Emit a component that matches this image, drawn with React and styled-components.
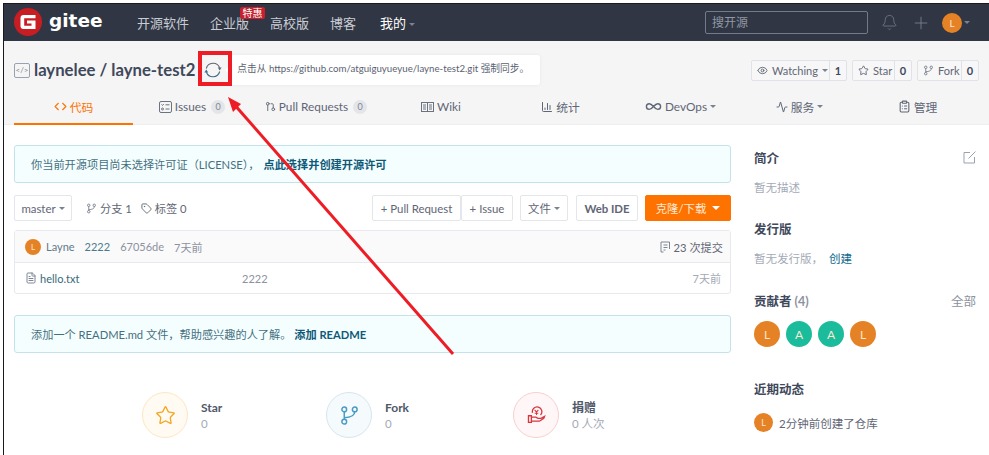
import React from "react";
import styled, { createGlobalStyle } from "styled-components";
import {
  Bell,
  Plus,
  Eye,
  Star,
  Tag,
  FileText,
  GitPullRequest,
  ChartColumn,
  Infinity as InfinityIcon,
  Activity,
  ClipboardList,
  Code,
} from "lucide-react";

const Global = createGlobalStyle`
  html, body { margin: 0; padding: 0; background: #fff; overflow: hidden; }
  body { font-family: Lato, "Noto Sans CJK SC", sans-serif; color: #40485b; font-size: 12px; }
  * { box-sizing: border-box; }
`;

const Frame = styled.div`
  position: relative;
  width: 989px;
  height: 455px;
  padding: 3px 0 0 3px;
  overflow: hidden;
`;

const Page = styled.div`
  border-top: 1px solid #1a1a1a;
  border-left: 1px solid #1a1a1a;
  height: 452px;
`;

const Nav = styled.div`
  display: flex;
  align-items: center;
  height: 37px;
  background: #303643;
  padding-left: 10px;
`;

const Logo = styled.div`
  display: flex;
  align-items: center;
  gap: 7px;
  width: 123px;
  color: #fff;
  font: 700 18.5px/1 "DejaVu Sans", sans-serif;
  padding-bottom: 2px;
`;

const NavItem = styled.span`
  position: relative;
  font-size: 13px;
  color: ${(p) => (p.$active ? "#fff" : "#c8ccd4")};
  margin-right: ${(p) => p.$gap}px;
  white-space: nowrap;
`;

const Hot = styled.span`
  position: absolute;
  top: -6px;
  left: 30px;
  width: 25px;
  height: 12px;
  background: #c7202c;
  border-radius: 2px;
  color: #fff;
  font-size: 10px;
  line-height: 12px;
  text-align: center;
`;

const Caret = styled.i`
  display: inline-block;
  width: 0;
  height: 0;
  margin-left: ${(p) => p.$gap ?? 3}px;
  vertical-align: middle;
  border-left: ${(p) => p.$size || 3}px solid transparent;
  border-right: ${(p) => p.$size || 3}px solid transparent;
  border-top: ${(p) => p.$size || 3}px solid ${(p) => p.$color || "#7a8190"};
`;

const NavRight = styled.div`
  margin-left: auto;
  display: flex;
  align-items: center;
  padding-right: 19px;
  color: #7f8695;
`;

const Search = styled.div`
  width: 163px;
  height: 23px;
  border: 1px solid #737a8a;
  border-radius: 2px;
  color: #9097a5;
  font-size: 12px;
  line-height: 21px;
  padding-left: 6px;
  margin-right: 13px;
`;

const Avatar = styled.span`
  display: inline-flex;
  align-items: center;
  justify-content: center;
  flex: none;
  width: ${(p) => p.$size}px;
  height: ${(p) => p.$size}px;
  border-radius: 50%;
  background: ${(p) => p.$bg || "#e58225"};
  color: #fbe6cf;
  font-size: ${(p) => Math.round(p.$size * 0.48)}px;
  font-weight: 400;
`;

const Head = styled.div`
  background: #f5f5f5;
  height: 84px;
  border-bottom: 1px solid #eceef0;
`;

const TitleRow = styled.div`
  display: flex;
  align-items: center;
  height: 49px;
  padding: 9px 10px 0 10px;
`;

const RepoIcon = styled.span`
  display: inline-flex;
  align-items: center;
  justify-content: center;
  width: 16px;
  height: 15px;
  border: 1px solid #9aa1b0;
  border-radius: 2px;
  color: #7c8494;
  font-size: 8px;
  margin-right: 4px;
`;

const RepoName = styled.span`
  font-size: 16.7px;
  font-weight: 700;
  color: #40485b;
  white-space: nowrap;
`;

const SyncBox = styled.span`
  display: flex;
  width: 35px;
  justify-content: center;
`;

const Tip = styled.div`
  position: relative;
  width: 310px;
  height: 30px;
  background: #fff;
  border-radius: 3px;
  box-shadow: 0 0 4px rgba(0, 0, 0, 0.06);
  font-size: 9.7px;
  line-height: 27px;
  color: #5b6270;
  padding-left: 7px;
  white-space: nowrap;

  &::before {
    content: "";
    position: absolute;
    left: -5px;
    top: 10px;
    border-top: 5px solid transparent;
    border-bottom: 5px solid transparent;
    border-right: 5px solid #fff;
  }
`;

const Social = styled.div`
  margin-left: auto;
  display: flex;
  gap: 5px;
`;

const SocialBtn = styled.div`
  display: flex;
  height: 21px;
  border: 1px solid #dfe2e7;
  background: #f7f7f8;
  border-radius: 2px;
  font-size: 11px;
  line-height: 19px;
  color: #5f6675;
`;

const SocialMain = styled.span`
  display: flex;
  align-items: center;
  gap: 4px;
  width: ${(p) => p.$w}px;
  padding-left: 5px;
  border-right: 1px solid #dfe2e7;
  white-space: nowrap;
`;

const SocialCount = styled.span`
  width: 16px;
  text-align: center;
  font-weight: 700;
  color: #40485b;
`;

const Tabs = styled.div`
  display: grid;
  grid-template-columns: 119px 118px 130px 120px 119px 121px 117px 119px;
  margin-left: 10px;
  height: 35px;
`;

const Tab = styled.div`
  display: flex;
  align-items: center;
  justify-content: center;
  gap: 3px;
  height: 35px;
  font-size: 11.8px;
  color: ${(p) => (p.$active ? "#fe7300" : "#5f6675")};
  border-bottom: 2px solid ${(p) => (p.$active ? "#fe7300" : "transparent")};
  white-space: nowrap;
`;

const TabCount = styled.span`
  display: inline-block;
  width: 14px;
  height: 14px;
  margin-left: 2px;
  border-radius: 50%;
  background: #e3e5e9;
  color: #7f8695;
  font-size: 9px;
  line-height: 14px;
  text-align: center;
`;

const Body = styled.div`
  display: grid;
  grid-template-columns: 717px 222px;
  column-gap: 23px;
  padding: 20px 0 0 10px;
`;

const Main = styled.div`
  display: flex;
  flex-direction: column;
`;

const Alert = styled.div`
  height: 38px;
  background: #f5feff;
  border: 1px solid #c3e3ea;
  border-radius: 3px;
  color: #44707e;
  font-size: 11.2px;
  line-height: 37px;
  padding-left: ${(p) => p.$pad}px;
  margin-bottom: ${(p) => p.$mb}px;
  white-space: nowrap;
`;

const AlertLink = styled.b`
  color: #0d5a78;
  font-weight: 700;
  margin-left: ${(p) => p.$ml || 0}px;
`;

const Toolbar = styled.div`
  display: flex;
  align-items: center;
  height: 26px;
  margin-bottom: 9px;
`;

const Btn = styled.div`
  display: flex;
  align-items: center;
  justify-content: center;
  height: 26px;
  width: ${(p) => p.$w}px;
  margin-right: ${(p) => p.$mr || 0}px;
  background: ${(p) => (p.$primary ? "#fe7300" : "#fff")};
  border: 1px solid ${(p) => (p.$primary ? "#fe7300" : "#e3e6ea")};
  border-radius: 2px;
  color: ${(p) => (p.$primary ? "#ffe9d6" : "#5f6675")};
  font-size: 11.4px;
  font-weight: ${(p) => (p.$bold ? 700 : 400)};
  white-space: nowrap;
`;

const Meta = styled.span`
  display: inline-flex;
  align-items: center;
  gap: 3px;
  margin-left: ${(p) => p.$ml}px;
  color: #5f6675;
  font-size: 11.2px;
`;

const Spacer = styled.div`
  flex: 1;
`;

const Commits = styled.div`
  border: 1px solid #e6e9ee;
  border-radius: 3px;
  height: 64px;
  margin-bottom: 21px;
`;

const CommitHead = styled.div`
  display: flex;
  align-items: center;
  height: 32px;
  padding: 0 7px 0 10px;
  background: #fafafa;
  border-bottom: 1px solid #e6e9ee;
  font-size: 11px;
`;

const CommitText = styled.span`
  color: ${(p) => p.$color};
  margin-left: ${(p) => p.$ml}px;
`;

const FileRow = styled.div`
  display: flex;
  align-items: center;
  height: 30px;
  padding: 0 9px 0 10px;
  font-size: 11px;
`;

const FileName = styled.span`
  display: inline-flex;
  align-items: center;
  gap: 3px;
  width: 217px;
  color: #376a7c;
`;

const Stats = styled.div`
  display: flex;
  padding: 39px 0 0 128px;
`;

const Stat = styled.div`
  display: flex;
  align-items: center;
  width: ${(p) => p.$w}px;
`;

const StatCircle = styled.div`
  display: flex;
  align-items: center;
  justify-content: center;
  width: 46px;
  height: 46px;
  margin-right: 13px;
  border-radius: 50%;
  background: ${(p) => p.$bg};
  border: 1px solid ${(p) => p.$line};
`;

const StatText = styled.div`
  padding-top: 2px;
  font-size: 12px;
  line-height: 16px;
  font-weight: 700;
  color: #505869;
`;

const StatNum = styled.div`
  font-weight: 400;
  color: #a3a9b6;
  font-size: 11.5px;
`;

const Side = styled.div`
  display: flex;
  flex-direction: column;
  color: #40485b;
`;

const SideHead = styled.div`
  display: flex;
  align-items: center;
  justify-content: space-between;
  height: 18px;
  margin-top: ${(p) => p.$mt || 0}px;
  font-size: 12.5px;
  font-weight: 700;
`;

const SideText = styled.div`
  margin-top: 13px;
  height: 18px;
  font-size: 11.5px;
  line-height: 18px;
  color: #a3a9b6;
`;

const SideLink = styled.a`
  color: #0d6a8e;
  margin-left: 6px;
`;

const Muted = styled.span`
  color: #8c92a0;
  font-weight: ${(p) => p.$weight || 400};
`;

const Faces = styled.div`
  display: flex;
  gap: 6px;
  margin-top: 12px;
`;

const Recent = styled.div`
  display: flex;
  align-items: center;
  gap: 6px;
  margin-top: 16px;
  font-size: 11.5px;
  color: #5f6675;
`;

// the annotation drawn over the screenshot, sits on top of everything
const RedBox = styled.div`
  position: absolute;
  left: 198px;
  top: 51px;
  width: 34px;
  height: 35px;
  border: 4px solid #ee1c25;
`;

const Arrow = styled.svg`
  position: absolute;
  left: 0;
  top: 0;
  pointer-events: none;
`;

const GiteeMark = () => (
  <svg width="28" height="28" viewBox="0 0 28 28">
    <circle cx="14" cy="14" r="14" fill="#c71d23" />
    <path
      d="M6.500 10a3 3 0 0 1 3-3h12v3.200H10.200v7.600h7.300v-2.400h-4.500v-3h8.500V21H9.500a3 3 0 0 1-3-3z"
      fill="#fff"
    />
  </svg>
);

const SyncIcon = () => (
  <svg width="18" height="18" viewBox="0 0 18 18" fill="none" strokeWidth="1.1">
    <path d="M2.300 7.500A7 7 0 0 1 15.600 6.800" stroke="#5f6675" />
    <path d="M15.700 10.500A7 7 0 0 1 2.400 11.200" stroke="#3f6f8d" />
    <path d="M13.800 6.500h3.800l-1.900 3z" fill="#5f6675" />
    <path d="M0.400 11.500h3.800l-1.900-3z" fill="#3f6f8d" />
  </svg>
);

const ForkIcon = ({ size = 12, color = "currentColor", width = 1.6 }) => (
  <svg width={size} height={size} viewBox="0 0 24 24" fill="none" stroke={color} strokeWidth={width}>
    <circle cx="6" cy="5" r="2.700" />
    <circle cx="18" cy="5" r="2.700" />
    <circle cx="6" cy="19" r="2.700" />
    <path d="M6 7.700v8.600M18 7.700c0 4.300-3 6.300-12 7" />
  </svg>
);

const EditIcon = () => (
  <svg width="13" height="13" viewBox="0 0 13 13" fill="none" stroke="#9aa1b0" strokeWidth="1">
    <path d="M7 1.500H1v10.500h10.500V6M5.500 7.500L12.500 0.500" />
  </svg>
);

const CommitIcon = () => (
  <svg width="11" height="12" viewBox="0 0 11 12" fill="none" stroke="#7f8695" strokeWidth="1">
    <path d="M3.500 11H1V1h8.500v7M3.500 4h4M3.500 6.500h4M3.500 9h2" />
  </svg>
);

const IssueIcon = () => (
  <svg width="13" height="12" viewBox="0 0 13 12" fill="none" stroke="#6b7280" strokeWidth="1">
    <rect x="0.500" y="0.500" width="12" height="11" rx="1.500" />
    <path d="M6.500 3.800h4M6.500 8h4M2.500 3.500l1 1 1.200-1.500" />
    <circle cx="3.500" cy="8" r="1" />
  </svg>
);

const WikiIcon = () => (
  <svg width="13" height="10" viewBox="0 0 13 10" fill="none" stroke="#6b7280" strokeWidth="1">
    <rect x="0.500" y="0.500" width="12" height="9" />
    <path d="M6.500 0.500v9M2 3h3M2 5h3M2 7h3M8 3h3M8 5h3M8 7h3" />
  </svg>
);

const DonateIcon = () => (
  <svg width="19" height="18" viewBox="0 0 26 24" fill="none" stroke="#d9363e" strokeWidth="1.800">
    <path d="M7.500 9a6.500 6.500 0 1 1 11 3" />
    <path d="M10.500 5l2.500 3 2.500-3M13 8v4M10.500 9.500h5" strokeWidth="1.400" />
    <path d="M2 13h4v9H2zM6 15h6l3 1.500h4l5-2.500-1 2.500-6 4H6" />
  </svg>
);

const tabs = [
  { label: "Issues", icon: <IssueIcon />, count: 0 },
  { label: "Pull Requests", icon: <GitPullRequest size={11} />, count: 0 },
  { label: "Wiki", icon: <WikiIcon /> },
  { label: "统计", icon: <ChartColumn size={12} /> },
  { label: "DevOps", icon: <InfinityIcon size={17} />, caret: true },
  { label: "服务", icon: <Activity size={12} />, caret: true },
  { label: "管理", icon: <ClipboardList size={13} /> },
];

export default function App() {
  return (
    <Frame>
      <Global />
      <Page>
        <Nav>
          <Logo>
            <GiteeMark />
            gitee
          </Logo>
          <NavItem $gap={21}>开源软件</NavItem>
          <NavItem $gap={21}>
            企业版
            <Hot>特惠</Hot>
          </NavItem>
          <NavItem $gap={21}>高校版</NavItem>
          <NavItem $gap={24}>博客</NavItem>
          <NavItem $active>
            我的
            <Caret />
          </NavItem>
          <NavRight>
            <Search>搜开源</Search>
            <Bell size={17} strokeWidth={1} />
            <Plus size={20} strokeWidth={1} style={{ margin: "0 11px 0 13px" }} />
            <Avatar $size={20}>L</Avatar>
            <Caret $gap={2} />
          </NavRight>
        </Nav>

        <Head>
          <TitleRow>
            <RepoIcon>&lt;/&gt;</RepoIcon>
            <RepoName>laynelee / layne-test2</RepoName>
            <SyncBox>
              <SyncIcon />
            </SyncBox>
            <Tip>点击从 https://github.com/atguiguyueyue/layne-test2.git 强制同步。</Tip>
            <Social>
              <SocialBtn>
                <SocialMain $w={78}>
                  <Eye size={11} />
                  Watching
                  <Caret $gap={0} />
                </SocialMain>
                <SocialCount>1</SocialCount>
              </SocialBtn>
              <SocialBtn>
                <SocialMain $w={42}>
                  <Star size={11} />
                  Star
                </SocialMain>
                <SocialCount>0</SocialCount>
              </SocialBtn>
              <SocialBtn>
                <SocialMain $w={44}>
                  <ForkIcon size={11} />
                  Fork
                </SocialMain>
                <SocialCount>0</SocialCount>
              </SocialBtn>
            </Social>
          </TitleRow>
          <Tabs>
            <Tab $active>
              <Code size={13} />
              代码
            </Tab>
            {tabs.map((t) => (
              <Tab key={t.label}>
                {t.icon}
                {t.label}
                {t.count !== undefined && <TabCount>{t.count}</TabCount>}
                {t.caret && <Caret $gap={0} />}
              </Tab>
            ))}
          </Tabs>
        </Head>

        <Body>
          <Main>
            <Alert $pad={16} $mb={12}>
              你当前开源项目尚未选择许可证（LICENSE），<AlertLink $ml={4}>点此选择并创建开源许可</AlertLink>
            </Alert>
            <Toolbar>
              <Btn $w={58}>
                master
                <Caret />
              </Btn>
              <Meta $ml={14}>
                <ForkIcon size={11} />
                分支 1
              </Meta>
              <Meta $ml={9}>
                <Tag size={11} />
                标签 0
              </Meta>
              <Spacer />
              <Btn $w={89}>+ Pull Request</Btn>
              <Btn $w={52} $mr={7}>+ Issue</Btn>
              <Btn $w={48} $mr={8}>
                文件
                <Caret />
              </Btn>
              <Btn $w={62} $mr={7} $bold>Web IDE</Btn>
              <Btn $w={86} $primary>
                克隆/下载
                <Caret $gap={6} $size={4} $color="#fff" />
              </Btn>
            </Toolbar>
            <Commits>
              <CommitHead>
                <Avatar $size={16}>L</Avatar>
                <CommitText $color="#5f7a8a" $ml={5}>Layne</CommitText>
                <CommitText $color="#4a7a8c" $ml={10}>2222</CommitText>
                <CommitText $color="#8c92a0" $ml={10}>67056de</CommitText>
                <CommitText $color="#8c92a0" $ml={10}>7天前</CommitText>
                <Spacer />
                <Meta $ml={0}>
                  <CommitIcon />
                  23 次提交
                </Meta>
              </CommitHead>
              <FileRow>
                <FileName>
                  <FileText size={12} color="#7f8695" />
                  hello.txt
                </FileName>
                <CommitText $color="#8c92a0" $ml={0}>2222</CommitText>
                <Spacer />
                <CommitText $color="#a3a9b6" $ml={0}>7天前</CommitText>
              </FileRow>
            </Commits>
            <Alert $pad={16} $mb={0}>
              添加一个 README.md 文件，帮助感兴趣的人了解。 <AlertLink>添加 README</AlertLink>
            </Alert>
            <Stats>
              <Stat $w={184}>
                <StatCircle $bg="#fffaf2" $line="#fde6c4">
                  <Star size={21} color="#f5a623" strokeWidth={1.5} />
                </StatCircle>
                <StatText>
                  Star
                  <StatNum>0</StatNum>
                </StatText>
              </Stat>
              <Stat $w={187}>
                <StatCircle $bg="#f5fafc" $line="#d5e6ee">
                  <ForkIcon size={21} color="#4a9cc4" width={1.7} />
                </StatCircle>
                <StatText>
                  Fork
                  <StatNum>0</StatNum>
                </StatText>
              </Stat>
              <Stat $w={120}>
                <StatCircle $bg="#fff7f7" $line="#f7cfcf">
                  <DonateIcon />
                </StatCircle>
                <StatText>
                  捐赠
                  <StatNum>0 人次</StatNum>
                </StatText>
              </Stat>
            </Stats>
          </Main>

          <Side>
            <SideHead $mt={3}>
              简介
              <EditIcon />
            </SideHead>
            <SideText>暂无描述</SideText>
            <SideHead $mt={22}>发行版</SideHead>
            <SideText>
              暂无发行版，
              <SideLink>创建</SideLink>
            </SideText>
            <SideHead $mt={23}>
              <span>
                贡献者 <Muted $weight={700}>(4)</Muted>
              </span>
              <Muted>全部</Muted>
            </SideHead>
            <Faces>
              <Avatar $size={26}>L</Avatar>
              <Avatar $size={26} $bg="#1abc9c">A</Avatar>
              <Avatar $size={26} $bg="#1abc9c">A</Avatar>
              <Avatar $size={26}>L</Avatar>
            </Faces>
            <SideHead $mt={32}>近期动态</SideHead>
            <Recent>
              <Avatar $size={19}>L</Avatar>
              2分钟前创建了仓库
            </Recent>
          </Side>
        </Body>
      </Page>

      <RedBox />
      <Arrow width="989" height="455" viewBox="0 0 989 455">
        <path d="M453 354L233 103" stroke="#ee1c25" strokeWidth="3" />
        <path d="M228 97l13 7-8 8z" fill="#ee1c25" />
      </Arrow>
    </Frame>
  );
}
